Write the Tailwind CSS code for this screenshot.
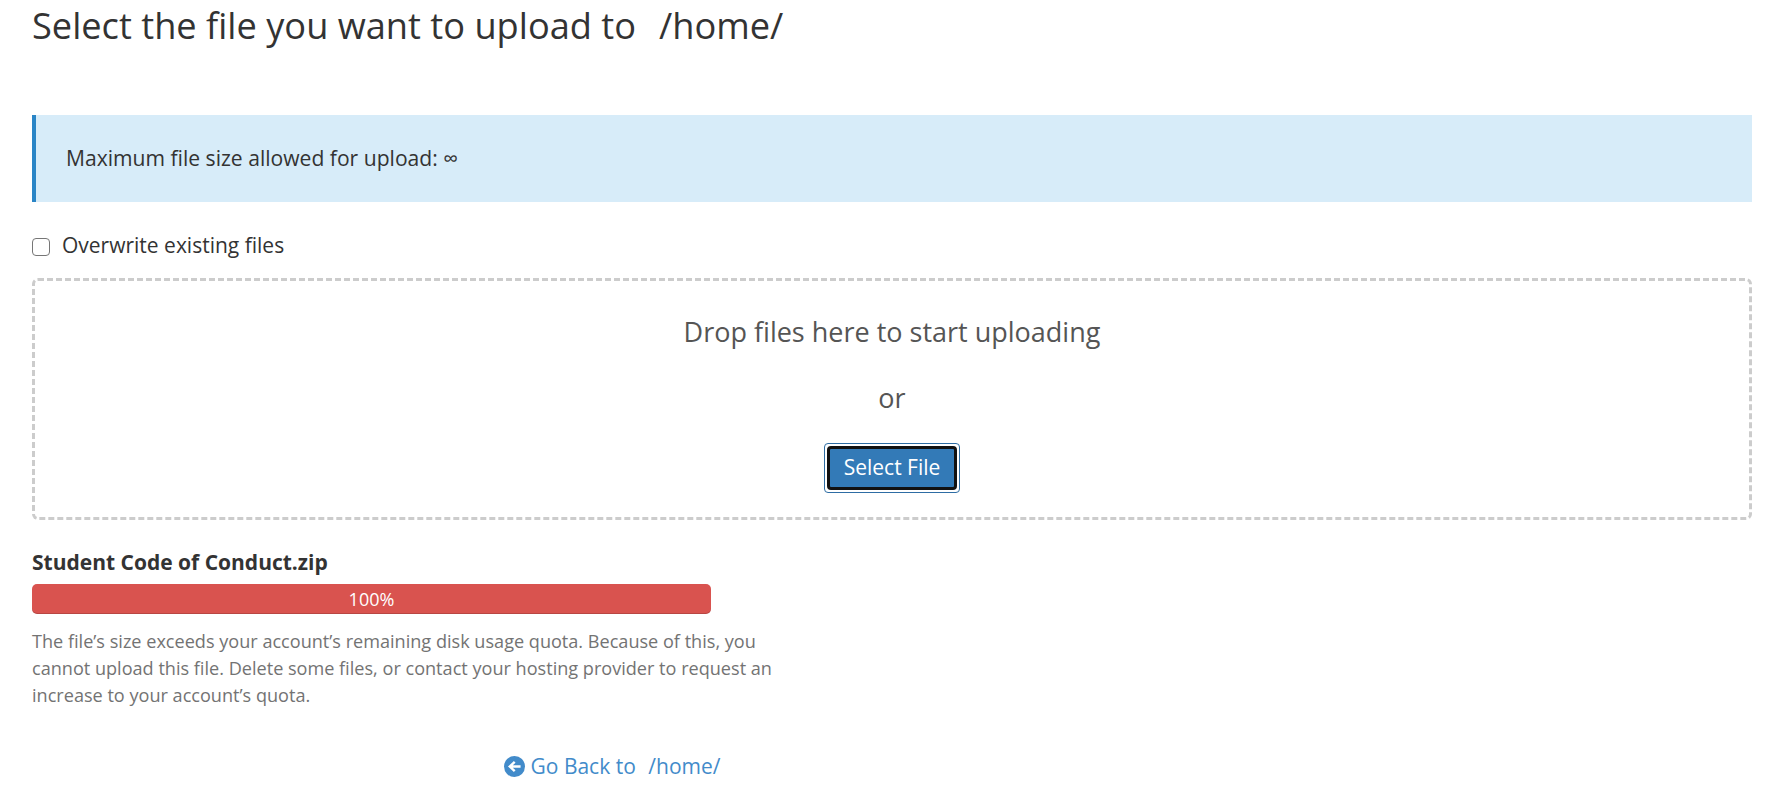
<!DOCTYPE html>
<html lang="en">
<head>
  <meta charset="UTF-8">
  <title>File Upload</title>
  <script src="https://cdn.jsdelivr.net/npm/@tailwindcss/browser@4"></script>
</head>
<body class="bg-white text-[#333] font-['Open_Sans',sans-serif] overflow-hidden">
  <div class="pl-8 pr-9 w-[1788px] h-[796px]">
    <!-- Heading -->
    <h1 class="text-[36.2px] leading-[50px] whitespace-pre">Select the file you want to upload to<span class="ml-[23px]">/home/</span></h1>

    <!-- Alert -->
    <div class="mt-[65px] h-[87px] bg-[#d7ecf9] border-l-4 border-[#2a85c6] flex items-center pl-[30px] pb-[2px] text-[21.1px]">
      Maximum file size allowed for upload: ∞
    </div>

    <!-- Overwrite -->
    <label class="mt-[30px] flex items-center gap-[12px] text-[21px] leading-[26px]">
      <span class="w-[18px] h-[18px] mt-[4px] border-[1.5px] border-[#767676] rounded-[4px] bg-white"></span>
      Overwrite existing files
    </label>

    <!-- Drop zone -->
    <div class="mt-[20px] h-[242px] border-[3px] border-dashed border-[#ccc] rounded-[6px] flex flex-col items-center text-[#555] text-[27px]">
      <p class="mt-[27px] leading-[48px]">Drop files here to start uploading</p>
      <p class="mt-[18px] leading-[48px]">or</p>
      <button class="mt-[21px] w-[136px] h-[50px] rounded-[4px] bg-white border border-[#2e6da4] p-[2px]">
        <span class="flex items-center justify-center w-full h-full rounded-[4px] bg-[#337ab7] border-[3px] border-[#111] text-white text-[21px]">Select File</span>
      </button>
    </div>

    <!-- Upload item -->
    <div class="mt-[28px] w-[745px]">
      <p class="font-bold text-[21px] leading-[28px]">Student Code of Conduct.zip</p>
      <div class="mt-[8px] w-[679px] h-[30px] rounded-[5px] bg-[#d9534f] shadow-[inset_0_-1px_0_rgba(0,0,0,0.15)] flex items-center justify-center text-white text-[18px]">100%</div>
      <p class="mt-[14px] text-[18.1px] leading-[27px] text-[#737373]">The file’s size exceeds your account’s remaining disk usage quota. Because of this, you cannot upload this file. Delete some files, or contact your hosting provider to request an increase to your account’s quota.</p>
    </div>

    <!-- Back link -->
    <div class="mt-[43px] w-[1160px] flex justify-center">
      <a href="#" class="flex items-center gap-[6px] text-[#428bca] text-[21px] leading-[28px] whitespace-pre">
        <svg class="w-[21px] h-[21px]" viewBox="0 0 20 20"><circle cx="10" cy="10" r="10" fill="#428bca"/><path d="M3.8 10 9.4 4.8 11 6.4 8.4 8.8H15.8V11.2H8.4L11 13.6 9.4 15.2Z" fill="#fff"/></svg>Go Back to<span class="ml-[6.5px]">/home/</span></a>
    </div>
  </div>
</body>
</html>
